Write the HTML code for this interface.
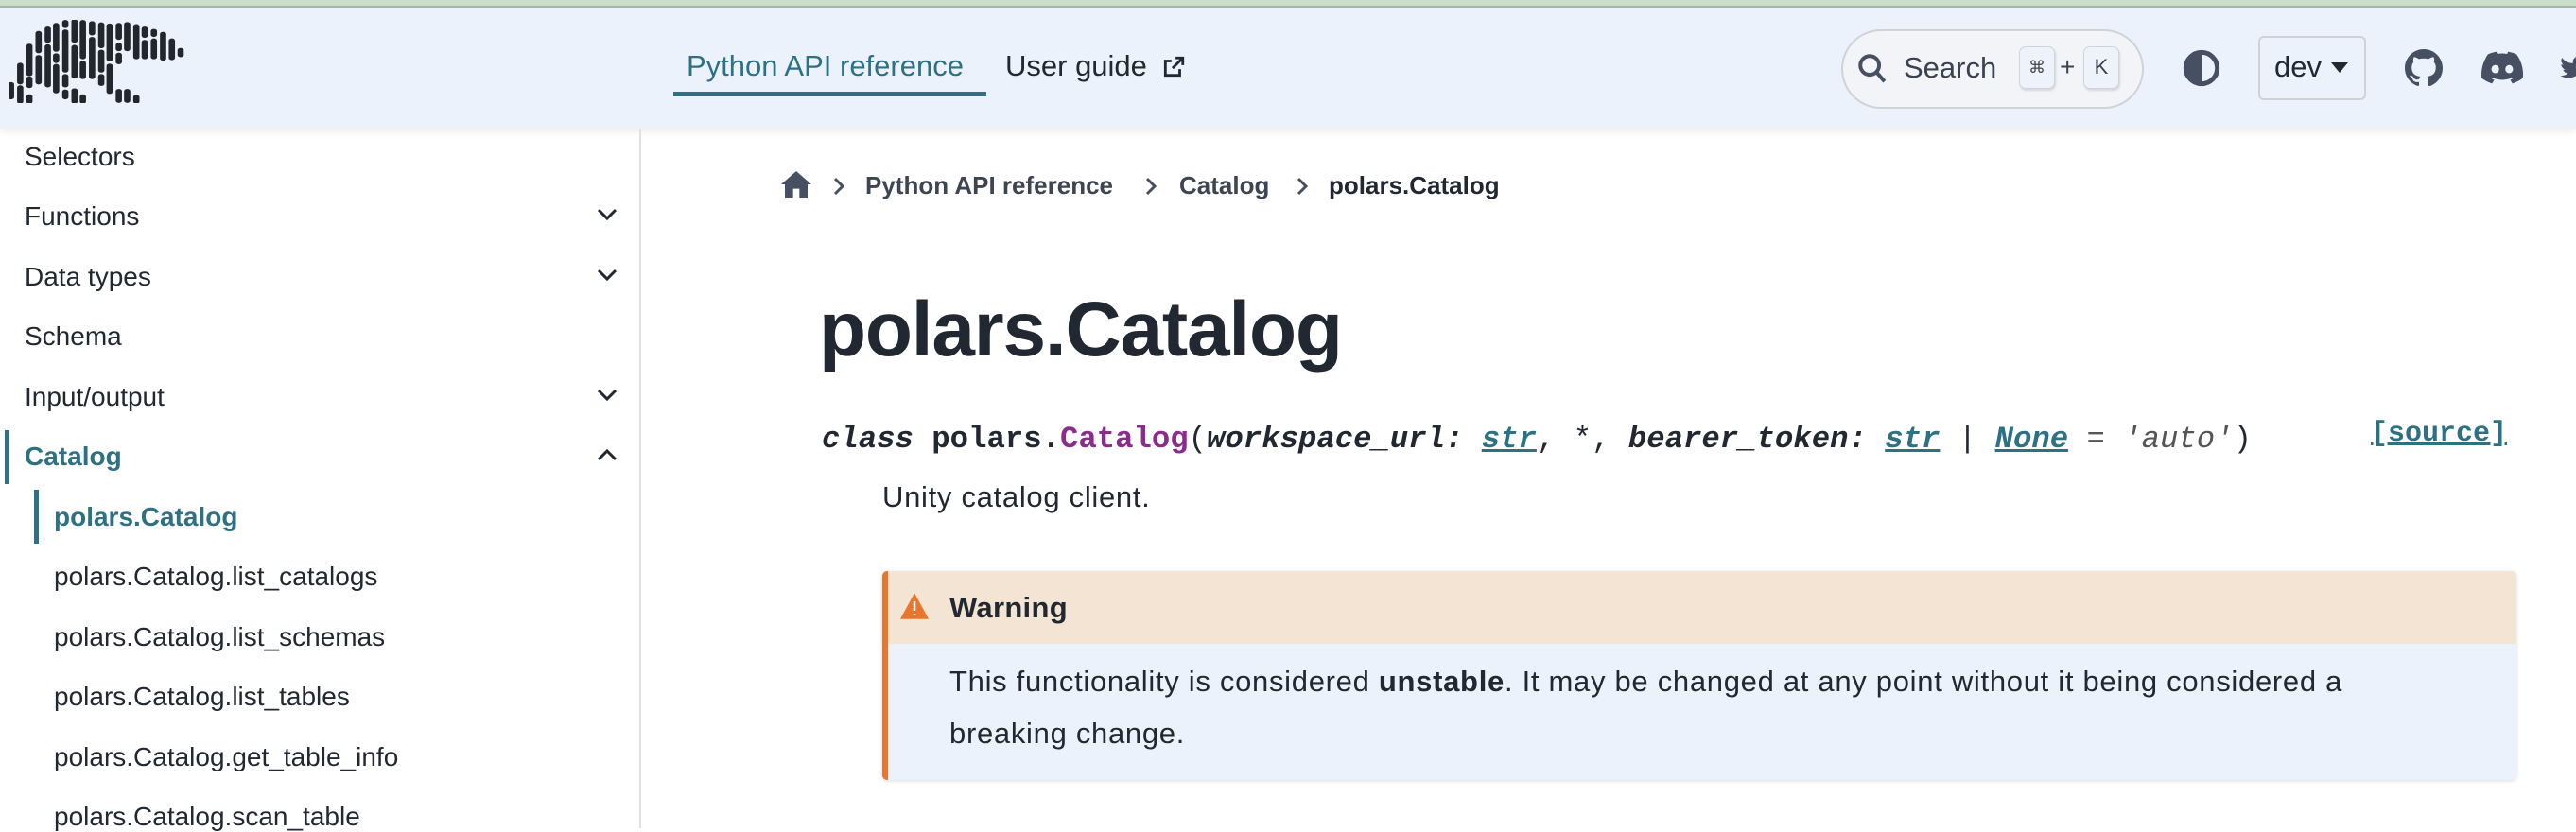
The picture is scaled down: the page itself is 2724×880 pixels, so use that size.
<!DOCTYPE html>
<html><head><meta charset="utf-8"><style>
*{margin:0;padding:0;box-sizing:border-box}
body{width:2724px;height:876px;overflow:hidden;background:#fff;font-family:"Liberation Sans",sans-serif;color:#222832;position:relative}
.a{position:absolute;white-space:nowrap}
.side{font-size:28px;color:#222832}
.t{color:#2d7183}
.mono{font-family:"Liberation Mono",monospace;font-size:32.3px}
.body{font-size:31px;letter-spacing:0.7px}
</style></head><body>
<div class="a" style="left:0;top:0;width:2724px;height:8px;background:#c8e0c8;border-bottom:2px solid #a9b9a9"></div>
<div class="a" style="left:0;top:8px;width:2724px;height:128px;background:#ebf2fc;box-shadow:0 3px 8px rgba(0,0,0,0.08)"></div>
<svg class="a" style="left:9px;top:21px" width="186" height="88" viewBox="14 75 421 280" preserveAspectRatio="none"><g stroke="#22272e" stroke-width="15" stroke-linecap="round">
<path d="M20 292V335M42 227V285M42 303V350M64 163V257M64 273V297M64 333V350M86 120V180M86 201V285M108 105V145M108 165V295M128 93V175M128 195V213M128 231V315M150 83V95M150 115V245M150 265V295M150 317V335M172 80V145M172 167V265M172 313V350M192 83V200M192 220V267M192 333V350M214 87V120M214 140V267M236 91V163M236 183V245M236 265V290M256 95V207M256 230V317M278 93V135M278 160V173M278 193V217M278 315V347M298 90V173M298 315V347M320 97V200M320 335V350M340 105V128M340 150V200M362 113V125M362 145V200M384 123V205M405 145V203M426 177V193"/></g></svg>

<div class="a t" style="left:726px;top:52px;font-size:31px">Python API reference</div>
<div class="a" style="left:712px;top:97px;width:331px;height:5px;background:#2d7183"></div>
<div class="a" style="left:1063px;top:52px;font-size:31px;color:#222832">User guide</div>
<svg class="a" style="left:1228px;top:58px" width="26" height="26" viewBox="0 0 24 24" fill="none" stroke="#222832" stroke-width="2.6"><path d="M14 3h7v7M21 3l-10 10M18 14v6H4V6h6"/></svg>

<div class="a" style="left:1947px;top:31px;width:320px;height:84px;border:2px solid #cfd2d6;border-radius:42px;background:#f2f4f7"></div>
<svg class="a" style="left:1963px;top:54px" width="34" height="36" viewBox="0 0 24 24" fill="none" stroke="#465062" stroke-width="2.8"><circle cx="10" cy="10" r="7"/><path d="M15 15l6 7"/></svg>
<div class="a" style="left:2013px;top:54px;font-size:31px;color:#3a4250">Search</div>
<div class="a" style="left:2135px;top:49px;width:38px;height:45px;border:1.5px solid #cfd5dc;border-radius:7px;background:#eef3fb;box-shadow:1px 2px 2px rgba(0,0,0,.12);font-size:18px;text-align:center;line-height:42px;color:#444">⌘</div>
<div class="a" style="left:2178px;top:55px;font-size:28px;color:#3a4250">+</div>
<div class="a" style="left:2203px;top:49px;width:38px;height:45px;border:1.5px solid #cfd5dc;border-radius:7px;background:#eef3fb;box-shadow:1px 2px 2px rgba(0,0,0,.12);font-size:22px;text-align:center;line-height:42px;color:#3a4250">K</div>

<svg class="a" style="left:2308px;top:52px" width="40" height="40" viewBox="0 0 24 24"><circle cx="12" cy="12" r="10" fill="none" stroke="#465062" stroke-width="3"/><path d="M12 2a10 10 0 0 0 0 20z" fill="#465062"/></svg>
<div class="a" style="left:2388px;top:38px;width:114px;height:68px;border:2px solid #cfd2d6;border-radius:6px"></div>
<div class="a" style="left:2405px;top:53px;font-size:31px;color:#222832">dev</div>
<svg class="a" style="left:2465px;top:66px" width="18" height="12" viewBox="0 0 18 12"><path d="M0 0h18L9 11z" fill="#222832"/></svg>
<svg class="a" style="left:2543px;top:51px" width="40" height="42" viewBox="0 0 16 16"><path fill="#465062" d="M8 0C3.58 0 0 3.58 0 8c0 3.540 2.29 6.53 5.470 7.59.4.07.55-.17.55-.38v-1.33c-2.23.48-2.7-1.07-2.7-1.07-.36-.92-.89-1.170-.89-1.170-.73-.5.05-.49.05-.49.8.06 1.23.83 1.23.83.72 1.22 1.87.87 2.33.66.07-.52.28-.87.5-1.07-1.78-.2-3.64-.89-3.64-3.95 0-.87.31-1.59.82-2.15-.08-.2-.36-1.020.08-2.12 0 0 .67-.21 2.2.82a7.6 7.6 0 0 1 4 0c1.53-1.04 2.2-.82 2.2-.82.44 1.1.16 1.92.08 2.12.51.56.82 1.27.82 2.15 0 3.07-1.87 3.75-3.65 3.95.29.25.54.73.54 1.48v2.2c0 .21.15.46.55.38A8 8 0 0 0 16 8c0-4.42-3.58-8-8-8z"/></svg>
<svg class="a" style="left:2624px;top:54px" width="44" height="36" viewBox="0 0 24 19"><path fill="#465062" d="M20.3 1.6A19.8 19.8 0 0 0 15.4 0l-.6 1.3a18 18 0 0 0-5.6 0L8.6 0a19.7 19.7 0 0 0-4.9 1.6C.6 6.3-.3 10.8.1 15.3A20 20 0 0 0 6.1 18.4l1.3-2.1c-.7-.3-1.4-.6-2-1l.5-.4a14 14 0 0 0 12.2 0l.5.4c-.6.4-1.3.7-2 1l1.3 2.1a20 20 0 0 0 6-3.1c.5-5.2-.8-9.7-3.6-13.7zM8 12.5c-1.2 0-2.2-1.1-2.2-2.4S6.8 7.7 8 7.7s2.2 1.1 2.2 2.4S9.2 12.5 8 12.5zm8 0c-1.2 0-2.2-1.1-2.2-2.4S14.8 7.7 16 7.700s2.2 1.1 2.2 2.4-1 2.4-2.2 2.4z"/></svg>
<svg class="a" style="left:2706px;top:55px" width="30" height="34" viewBox="0 0 24 24"><path fill="#465062" d="M23 4.5a9 9 0 0 1-2.6.7 4.6 4.6 0 0 0 2-2.5 9 9 0 0 1-2.9 1.1A4.5 4.5 0 0 0 11.8 8 12.8 12.8 0 0 1 2.5 3.3 4.5 4.5 0 0 0 3.9 9.3a4.5 4.5 0 0 1-2-.6 4.5 4.5 0 0 0 3.6 4.5 4.5 4.5 0 0 1-2 .1 4.5 4.5 0 0 0 4.2 3.1A9 9 0 0 1 1 18.3 12.8 12.8 0 0 0 7.9 20.3c8.3 0 12.8-6.9 12.8-12.8v-.6A9 9 0 0 0 23 4.5z"/></svg>

<div class="a" style="left:676px;top:136px;width:2px;height:740px;background:#dfe1e4"></div>
<div class="a side" style="left:26px;top:150px">Selectors</div>
<div class="a side" style="left:26px;top:213px">Functions</div>
<div class="a side" style="left:26px;top:277px">Data types</div>
<div class="a side" style="left:26px;top:340px">Schema</div>
<div class="a side" style="left:26px;top:404px">Input/output</div>
<div class="a side t" style="left:26px;top:467px;font-weight:bold">Catalog</div>
<div class="a" style="left:5px;top:455px;width:5px;height:57px;background:#2d7183"></div>
<div class="a side t" style="left:57px;top:531px;font-weight:bold">polars.Catalog</div>
<div class="a" style="left:36px;top:518px;width:5px;height:57px;background:#2d7183"></div>
<div class="a side" style="left:57px;top:594px">polars.Catalog.list_catalogs</div>
<div class="a side" style="left:57px;top:658px">polars.Catalog.list_schemas</div>
<div class="a side" style="left:57px;top:721px">polars.Catalog.list_tables</div>
<div class="a side" style="left:57px;top:785px">polars.Catalog.get_table_info</div>
<div class="a side" style="left:57px;top:848px">polars.Catalog.scan_table</div>
<svg class="a" style="left:631px;top:220px" width="22" height="14" viewBox="0 0 22 14" fill="none" stroke="#222832" stroke-width="3"><path d="M2 2l9 9 9-9"/></svg>
<svg class="a" style="left:631px;top:284px" width="22" height="14" viewBox="0 0 22 14" fill="none" stroke="#222832" stroke-width="3"><path d="M2 2l9 9 9-9"/></svg>
<svg class="a" style="left:631px;top:411px" width="22" height="14" viewBox="0 0 22 14" fill="none" stroke="#222832" stroke-width="3"><path d="M2 2l9 9 9-9"/></svg>
<svg class="a" style="left:631px;top:474px" width="22" height="14" viewBox="0 0 22 14" fill="none" stroke="#222832" stroke-width="3"><path d="M2 12l9-9 9 9"/></svg>

<svg class="a" style="left:826px;top:181px" width="32" height="28" viewBox="0 0 24 21"><path fill="#465062" d="M12 0L0 10.5h3V21h6.5v-7h5v7H21V10.5h3z"/></svg>
<svg class="a" style="left:880px;top:187px" width="14" height="20" viewBox="0 0 14 20" fill="none" stroke="#465062" stroke-width="3"><path d="M3 2l8 8-8 8"/></svg>
<div class="a" style="left:915px;top:181px;font-size:26px;font-weight:bold;color:#3d4552">Python API reference</div>
<svg class="a" style="left:1210px;top:187px" width="14" height="20" viewBox="0 0 14 20" fill="none" stroke="#465062" stroke-width="3"><path d="M3 2l8 8-8 8"/></svg>
<div class="a" style="left:1247px;top:181px;font-size:26px;font-weight:bold;color:#3d4552">Catalog</div>
<svg class="a" style="left:1370px;top:187px" width="14" height="20" viewBox="0 0 14 20" fill="none" stroke="#465062" stroke-width="3"><path d="M3 2l8 8-8 8"/></svg>
<div class="a" style="left:1405px;top:181px;font-size:26px;font-weight:bold;color:#222832">polars.Catalog</div>

<div class="a" style="left:866px;top:302px;font-size:82px;font-weight:bold;color:#222832;letter-spacing:-1.2px">polars.Catalog</div>

<div class="a mono" style="left:869px;top:446px;font-weight:bold"><i>class</i> polars.<span style="color:#8b2b8c">Catalog</span><span style="font-weight:normal">(</span><i>workspace_url:</i> <i class="t" style="text-decoration:underline">str</i><span style="font-weight:normal">,</span> <span style="font-weight:normal">*,</span> <i>bearer_token:</i> <i class="t" style="text-decoration:underline">str</i> <span style="font-weight:normal">|</span> <i class="t" style="text-decoration:underline">None</i> <span style="font-weight:normal;color:#555">=</span> <i style="font-weight:normal;color:#555">'auto'</i><span style="font-weight:normal">)</span></div>
<div class="a mono t" style="left:2507px;top:442px;font-weight:bold;font-size:30px;text-decoration:underline">[source]</div>
<div class="a body" style="left:933px;top:508px">Unity catalog client.</div>

<div class="a" style="left:933px;top:604px;width:1728px;height:221px;background:#ebf2fc;border-left:6px solid #e8762d;border-radius:5px;box-shadow:0 1px 4px rgba(0,0,0,.15);overflow:hidden">
<div style="height:77px;background:#f4e4d3"></div></div>
<svg class="a" style="left:952px;top:627px" width="30" height="28" viewBox="0 0 24 22"><path fill="#e8762d" d="M12 0L24 22H0z"/><path d="M12 7v8M12 17.5v1.5" stroke="#fff" stroke-width="2"/></svg>
<div class="a" style="left:1004px;top:625px;font-size:31px;font-weight:bold;letter-spacing:0.3px">Warning</div>
<div class="a body" style="left:1004px;top:703px">This functionality is considered <b>unstable</b>. It may be changed at any point without it being considered a</div>
<div class="a body" style="left:1004px;top:758px">breaking change.</div>
</body></html>
